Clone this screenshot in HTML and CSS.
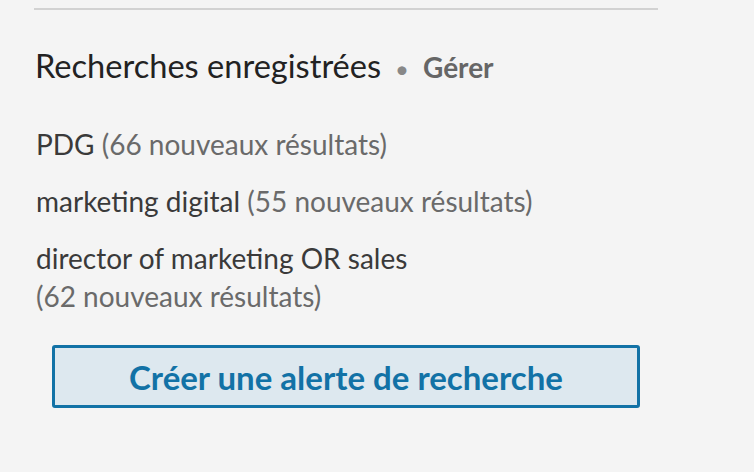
FILE: index.html
```html
<!DOCTYPE html>
<html lang="fr">
<head>
<meta charset="UTF-8">
<meta name="viewport" content="width=device-width, initial-scale=1.0">
<title>Recherches enregistrées</title>
<link rel="stylesheet" href="styles.css">
</head>
<body>

<div class="panel">
    <div class="panel-head">
        <h3>Recherches enregistrées</h3>
        <span class="dot">&bull;</span>
        <a href="#" class="manage">Gérer</a>
    </div>
    <ul class="saved-list">
        <li>PDG <span class="count">(66 nouveaux résultats)</span></li>
        <li>marketing digital <span class="count">(55 nouveaux résultats)</span></li>
        <li>director of marketing OR sales <span class="count">(62 nouveaux résultats)</span></li>
    </ul>
    <div class="actions">
        <button class="alert-btn">Créer une alerte de recherche</button>
    </div>
</div>

</body>
</html>
```

FILE: styles.css
```css
body {
    margin: 0;
    padding: 0;
    background-color: #f4f4f4;
    font-family: Lato, "Open Sans", sans-serif;
}

.panel {
    width: 624px;
    margin-left: 34px;
    padding-top: 8px;
}

.panel-head {
    border-top: 2px solid #d2d2d2;
    padding: 37px 0 0 1px;
    display: flex;
    align-items: baseline;
    line-height: 38px;
}

.panel-head h3 {
    margin: 0;
    font-size: 32.6px;
    font-weight: normal;
    color: #222;
}

.dot {
    color: #888;
    font-size: 24px;
    margin: 0 14px 0 14px;
}

.manage {
    color: #666;
    font-weight: bold;
    font-size: 28px;
    text-decoration: none;
}

.saved-list {
    list-style: none;
    margin: 37px 0 0 0;
    padding: 0 0 0 2px;
}

.saved-list li {
    font-size: 28px;
    line-height: 38px;
    color: #3a3a3a;
    margin-bottom: 19px;
}

/* keep the result count together so it drops to its own line */
.count {
    color: #6a6a6a;
    white-space: nowrap;
}

.actions {
    display: flex;
    justify-content: center;
    margin-top: 30px;
}

.alert-btn {
    width: 588px;
    height: 63px;
    background-color: #dde8ef;
    border: 3px solid #1272a6;
    border-radius: 3px;
    color: #1272a6;
    font-family: Lato, "Open Sans", sans-serif;
    font-size: 33px;
    font-weight: bold;
    cursor: pointer;
}
```
